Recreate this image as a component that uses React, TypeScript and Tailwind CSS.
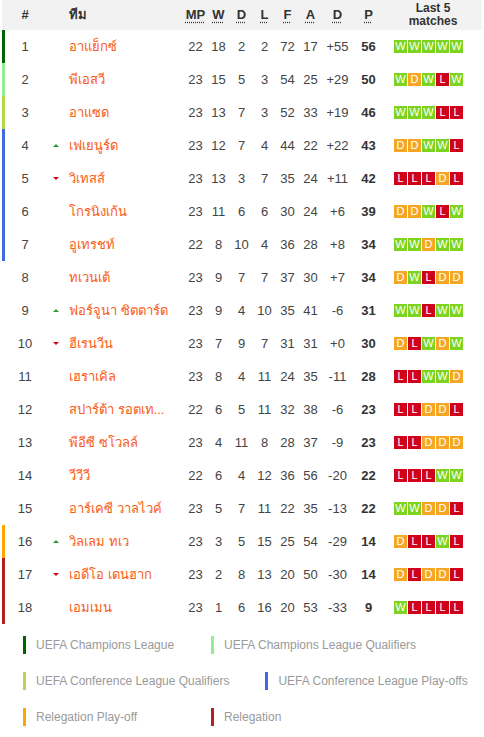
import React from "react";

type Res = "W" | "D" | "L";

interface Row {
    pos: number;
    team: string;
    move?: "up" | "down";
    zone?: string;
    mp: number;
    w: number;
    d: number;
    l: number;
    f: number;
    a: number;
    gd: string;
    p: number;
    form: Res[];
}

const f = (s: string) => s.split("") as Res[];

const rows: Row[] = [
    { pos: 1, team: "อาแย็กซ์", zone: "bg-[#006400]", mp: 22, w: 18, d: 2, l: 2, f: 72, a: 17, gd: "+55", p: 56, form: f("WWWWW") },
    { pos: 2, team: "พีเอสวี", zone: "bg-[#90ee90]", mp: 23, w: 15, d: 5, l: 3, f: 54, a: 25, gd: "+29", p: 50, form: f("WDWLW") },
    { pos: 3, team: "อาแซด", zone: "bg-[#b5d84a]", mp: 23, w: 13, d: 7, l: 3, f: 52, a: 33, gd: "+19", p: 46, form: f("WWWLL") },
    { pos: 4, team: "เฟเยนูร์ด", move: "up", zone: "bg-[#4169e1]", mp: 23, w: 12, d: 7, l: 4, f: 44, a: 22, gd: "+22", p: 43, form: f("DDWWL") },
    { pos: 5, team: "วิเทสส์", move: "down", zone: "bg-[#4169e1]", mp: 23, w: 13, d: 3, l: 7, f: 35, a: 24, gd: "+11", p: 42, form: f("LLLDL") },
    { pos: 6, team: "โกรนิงเก้น", zone: "bg-[#4169e1]", mp: 23, w: 11, d: 6, l: 6, f: 30, a: 24, gd: "+6", p: 39, form: f("DDWLW") },
    { pos: 7, team: "อูเทรชท์", zone: "bg-[#4169e1]", mp: 22, w: 8, d: 10, l: 4, f: 36, a: 28, gd: "+8", p: 34, form: f("WWDWW") },
    { pos: 8, team: "ทเวนเต้", mp: 23, w: 9, d: 7, l: 7, f: 37, a: 30, gd: "+7", p: 34, form: f("DWLDD") },
    { pos: 9, team: "ฟอร์จูนา ซิตตาร์ด", move: "up", mp: 23, w: 9, d: 4, l: 10, f: 35, a: 41, gd: "-6", p: 31, form: f("WWLWW") },
    { pos: 10, team: "ฮีเรนวีน", move: "down", mp: 23, w: 7, d: 9, l: 7, f: 31, a: 31, gd: "+0", p: 30, form: f("DLWDW") },
    { pos: 11, team: "เฮราเคิล", mp: 23, w: 8, d: 4, l: 11, f: 24, a: 35, gd: "-11", p: 28, form: f("LLWWD") },
    { pos: 12, team: "สปาร์ต้า รอตเท...", mp: 22, w: 6, d: 5, l: 11, f: 32, a: 38, gd: "-6", p: 23, form: f("LLDDL") },
    { pos: 13, team: "พีอีซี ซโวลล์", mp: 23, w: 4, d: 11, l: 8, f: 28, a: 37, gd: "-9", p: 23, form: f("LLDDD") },
    { pos: 14, team: "วีวีวี", mp: 22, w: 6, d: 4, l: 12, f: 36, a: 56, gd: "-20", p: 22, form: f("LLLWW") },
    { pos: 15, team: "อาร์เคซี วาลไวค์", mp: 23, w: 5, d: 7, l: 11, f: 22, a: 35, gd: "-13", p: 22, form: f("WWDDL") },
    { pos: 16, team: "วิลเลม ทเว", move: "up", zone: "bg-[#ffa500]", mp: 23, w: 3, d: 5, l: 15, f: 25, a: 54, gd: "-29", p: 14, form: f("DLLWL") },
    { pos: 17, team: "เอดีโอ เดนฮาก", move: "down", zone: "bg-[#b22222]", mp: 23, w: 2, d: 8, l: 13, f: 20, a: 50, gd: "-30", p: 14, form: f("DLDDL") },
    { pos: 18, team: "เอมเมน", zone: "bg-[#b22222]", mp: 23, w: 1, d: 6, l: 16, f: 20, a: 53, gd: "-33", p: 9, form: f("WLLLL") },
];

const legend = [
    { label: "UEFA Champions League", color: "bg-[#006400]" },
    { label: "UEFA Champions League Qualifiers", color: "bg-[#90ee90]" },
    { label: "UEFA Conference League Qualifiers", color: "bg-[#b5d84a]" },
    { label: "UEFA Conference League Play-offs", color: "bg-[#4169e1]" },
    { label: "Relegation Play-off", color: "bg-[#ffa500]" },
    { label: "Relegation", color: "bg-[#b22222]" },
];

const cols = "grid grid-cols-[3px_40px_21px_118px_23px_23px_23px_23px_23px_23px_31px_31px_98px]";

const badgeColor: Record<Res, string> = {
    W: "bg-[#7ed321]",
    D: "bg-[#f5a623]",
    L: "bg-[#d0021b]",
};

function Abbr({ children }: { children: React.ReactNode }) {
    return <span className="underline decoration-dotted underline-offset-[3px]">{children}</span>;
}

function Arrow({ move }: { move?: "up" | "down" }) {
    if (move === "up")
        return <span className="w-0 h-0 border-l-[3px] border-r-[3px] border-b-[3px] border-l-transparent border-r-transparent border-b-[#2f9a2f]" />;
    if (move === "down")
        return <span className="w-0 h-0 border-l-[3px] border-r-[3px] border-t-[3px] border-l-transparent border-r-transparent border-t-[#d0021b]" />;
    return null;
}

export default function App() {
    return (
        <div className="w-[484px] h-[737px] bg-white overflow-hidden font-['Liberation_Sans',Arial,sans-serif]">
            <div className="px-[2px]">
                {/* header */}
                <div className={`${cols} h-[30px] items-center bg-[#f2f2f2] text-[13px] font-bold text-[#333]`}>
                    <span />
                    <span className="text-center">#</span>
                    <span />
                    <span className="pl-[3px]">ทีม</span>
                    <span className="text-center"><Abbr>MP</Abbr></span>
                    <span className="text-center"><Abbr>W</Abbr></span>
                    <span className="text-center"><Abbr>D</Abbr></span>
                    <span className="text-center"><Abbr>L</Abbr></span>
                    <span className="text-center"><Abbr>F</Abbr></span>
                    <span className="text-center"><Abbr>A</Abbr></span>
                    <span className="text-center"><Abbr>D</Abbr></span>
                    <span className="text-center"><Abbr>P</Abbr></span>
                    <span className="text-center text-[12px] leading-[13px]">Last 5<br />matches</span>
                </div>

                {rows.map((r) => (
                    <div key={r.pos} className={`${cols} h-[33px] items-center text-[13px] text-[#444]`}>
                        <span className={`h-full ${r.zone ?? ""}`} />
                        <span className="text-center">{r.pos}</span>
                        <span className="flex justify-center">
                            <Arrow move={r.move} />
                        </span>
                        <span className="pl-[3px] text-[#fa5a14] whitespace-nowrap overflow-hidden">{r.team}</span>
                        <span className="text-center">{r.mp}</span>
                        <span className="text-center">{r.w}</span>
                        <span className="text-center">{r.d}</span>
                        <span className="text-center">{r.l}</span>
                        <span className="text-center">{r.f}</span>
                        <span className="text-center">{r.a}</span>
                        <span className="text-center">{r.gd}</span>
                        <span className="text-center font-bold text-[#333]">{r.p}</span>
                        <span className="flex gap-px pl-[10px]">
                            {r.form.map((res, i) => (
                                <span
                                    key={i}
                                    className={`w-[13px] h-[13px] flex items-center justify-center text-[11px] leading-none text-white ${badgeColor[res]}`}
                                >
                                    {res}
                                </span>
                            ))}
                        </span>
                    </div>
                ))}
            </div>

            {/* legend */}
            <div className="flex flex-wrap gap-x-[36px] gap-y-[18px] pl-[23px] pr-2 pt-[12px]">
                {legend.map((item) => (
                    <div key={item.label} className="flex items-center h-[18px] min-w-[152px]">
                        <span className={`w-[3px] h-[18px] ${item.color}`} />
                        <span className="ml-[10px] text-[12px] text-[#9a9a9a] whitespace-nowrap">{item.label}</span>
                    </div>
                ))}
            </div>
        </div>
    );
}
